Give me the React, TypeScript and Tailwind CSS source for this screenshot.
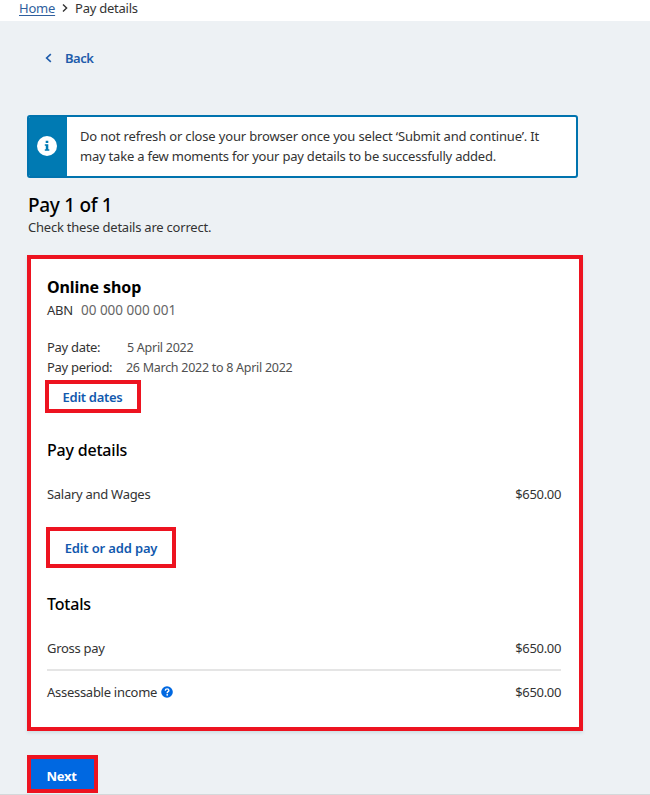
import type { ReactNode } from "react";

interface RowProps {
  label: ReactNode;
  amount: string;
}

const AmountRow = ({ label, amount }: RowProps) => (
  <div className="flex h-5 items-center justify-between">
    <span className="flex items-center tracking-[-0.28px]">{label}</span>
    <span className="pr-px tracking-[-0.33px]">{amount}</span>
  </div>
);

const Chevron = ({ className }: { className: string }) => (
  <svg viewBox="0 0 6 8" className={className} fill="none" stroke="currentColor" strokeWidth="1.4">
    <path d="M1 0.6 4.6 4 1 7.4" />
  </svg>
);

const InfoIcon = () => (
  <svg viewBox="0 0 20 20" className="size-5">
    <circle cx="10" cy="10" r="10" fill="#fff" />
    <path fill="#007ab3" d="M8.7 4.8h2.6v2.3H8.7zM7.8 8.3h3.5v5h1v1.5H7.8v-1.5h1V9.8h-1z" />
  </svg>
);

const HelpIcon = () => (
  <svg viewBox="0 0 512 512" className="ml-1 size-3">
    <circle cx="256" cy="256" r="248" fill="#0068e1" />
    <path d="M180 195c8-48 38-72 80-72 45 0 76 27 76 65 0 55-69 50-69 100v16" fill="none" stroke="#fff" strokeWidth="60" />
    <circle cx="265" cy="377" r="40" fill="#fff" />
  </svg>
);

export default function App() {
  return (
    <div className="flex h-[795px] w-[650px] flex-col overflow-hidden bg-[#edf1f4] font-['Noto_Sans','Open_Sans',sans-serif] text-[13px] leading-5 tracking-[-0.22px] text-[#333]">
      <nav className="flex h-[21px] items-center bg-white pb-1.5 pl-[19px]">
        <a href="#" className="text-[#2f5f9e] underline underline-offset-2">
          Home
        </a>
        <Chevron className="ml-[7px] h-2 w-1.5" />
        <span className="ml-[7px] tracking-[-0.25px]">Pay details</span>
      </nav>

      <main className="flex grow flex-col items-start pl-[27px]">
        <a href="#" className="mt-[27px] ml-[18px] flex h-5 items-center font-semibold text-[#1f5cab]">
          <Chevron className="h-2.5 w-[7px] rotate-180" />
          <span className="ml-[13px] tracking-[-0.45px]">Back</span>
        </a>

        <div className="mt-[47px] flex h-[63px] w-[551px] overflow-hidden rounded-[3px] border-2 border-[#0073ae] bg-white">
          <div className="flex w-[38px] items-center justify-center bg-[#007ab3] pr-0.5 pb-px">
            <InfoIcon />
          </div>
          <p className="pt-[9px] pl-[13px] whitespace-nowrap tracking-[-0.165px]">
            Do not refresh or close your browser once you select ‘Submit and continue’. It
            <br />
            <span className="tracking-[-0.21px]">
              may take a few moments for your pay details to be successfully added.
            </span>
          </p>
        </div>

        <h1 className="mt-[15px] h-6 pl-px text-[19px] leading-6 font-medium tracking-[-0.3px] text-black">
          Pay 1 of 1
        </h1>
        <p className="h-5 pl-px">Check these details are correct.</p>

        <section className="mt-[18px] flex h-[476px] w-[556px] flex-col items-stretch border-4 border-[#ed1320] bg-white pr-[17px] pl-4 shadow-[0_2px_3px_#cfdfe4]">
          <h2 className="mt-[18px] h-5 text-base leading-5 font-bold tracking-[-0.1px] text-black">Online shop</h2>
          <div className="mt-[3px] flex h-5">
            <span>ABN</span>
            <span className="ml-2 text-[13.5px] tracking-[-0.02px] text-[#666]">00 000 000 001</span>
          </div>

          <div className="mt-[17px] flex h-5">
            <span className="w-20 tracking-[-0.3px]">Pay date:</span>
            <span className="pt-px text-[12.5px] tracking-[-0.27px] text-[#505050]">5 April 2022</span>
          </div>
          <div className="flex h-5">
            <span className="w-[79px] tracking-[-0.3px]">Pay period:</span>
            <span className="pt-px text-[12.5px] tracking-[-0.28px] text-[#505050]">26 March 2022 to 8 April 2022</span>
          </div>
          <button className="mt-[3px] -ml-0.5 h-[33px] w-24 border-4 border-[#ed1320] pr-px font-semibold tracking-[-0.3px] text-[#1259ae]">
            Edit dates
          </button>

          <h3 className="mt-[27px] h-5 text-base leading-5 font-medium tracking-[-0.2px] text-black">Pay details</h3>
          <div className="mt-6">
            <AmountRow label="Salary and Wages" amount="$650.00" />
          </div>
          <button className="mt-[23px] -ml-px h-[41px] w-[130px] border-4 border-[#ed1320] font-semibold tracking-[-0.15px] text-[#1259ae]">
            Edit or add pay
          </button>

          <h3 className="mt-[26px] h-5 text-base leading-5 font-medium tracking-[-0.2px] text-black">Totals</h3>
          <div className="mt-6 mr-px border-b-2 border-[#e5e5e5] pb-[11px]">
            <div className="-mr-px">
              <AmountRow label="Gross pay" amount="$650.00" />
            </div>
          </div>
          <div className="mt-[11px]">
            <AmountRow
              label={
                <>
                  Assessable income
                  <HelpIcon />
                </>
              }
              amount="$650.00"
            />
          </div>
        </section>

        <button className="mt-6 h-[38px] w-[71px] border-4 border-[#ed1320] bg-[#0068e1] pt-[3px] pr-0.5 font-bold tracking-[-0.3px] text-white">
          Next
        </button>
      </main>
      <div className="h-px shrink-0 bg-[#d5d8da]" />
    </div>
  );
}
